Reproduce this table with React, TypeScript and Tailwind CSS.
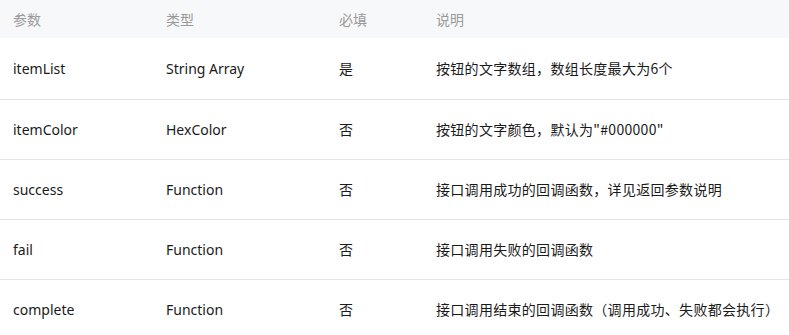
const rows = [
  { name: "itemList", type: "String Array", required: "是", desc: "按钮的文字数组，数组长度最大为6个" },
  { name: "itemColor", type: "HexColor", required: "否", desc: "按钮的文字颜色，默认为\"#000000\"" },
  { name: "success", type: "Function", required: "否", desc: "接口调用成功的回调函数，详见返回参数说明" },
  { name: "fail", type: "Function", required: "否", desc: "接口调用失败的回调函数" },
  { name: "complete", type: "Function", required: "否", desc: "接口调用结束的回调函数（调用成功、失败都会执行）" },
];

export default function App() {
  return (
    <div className="w-[789px] h-[335px] overflow-hidden bg-white text-[14px] font-['Noto_Sans','Noto_Sans_CJK_SC',sans-serif]">
      <div className="grid grid-cols-[153px_173px_97px_1fr] h-[38px] items-center bg-[#f7f8fa] text-[#999999]">
        <div className="pl-[13px]">参数</div>
        <div className="pl-[13px]">类型</div>
        <div className="pl-[13px]">必填</div>
        <div className="pl-[13px]">说明</div>
      </div>
      {rows.map((r, i) => (
        <div
          key={r.name}
          className={
            "grid grid-cols-[153px_173px_97px_1fr] items-center border-b border-[#e5e5e5] text-[#1a1a1a] " +
            (i === 0 ? "h-[62px]" : "h-[60px]")
          }
        >
          <div className="pl-[13px]">{r.name}</div>
          <div className="pl-[13px]">{r.type}</div>
          <div className="pl-[13px]">{r.required}</div>
          <div className="pl-[13px] whitespace-nowrap tracking-[0.3px] font-['Noto_Sans_CJK_SC',sans-serif]">
            {r.desc}
          </div>
        </div>
      ))}
    </div>
  );
}
